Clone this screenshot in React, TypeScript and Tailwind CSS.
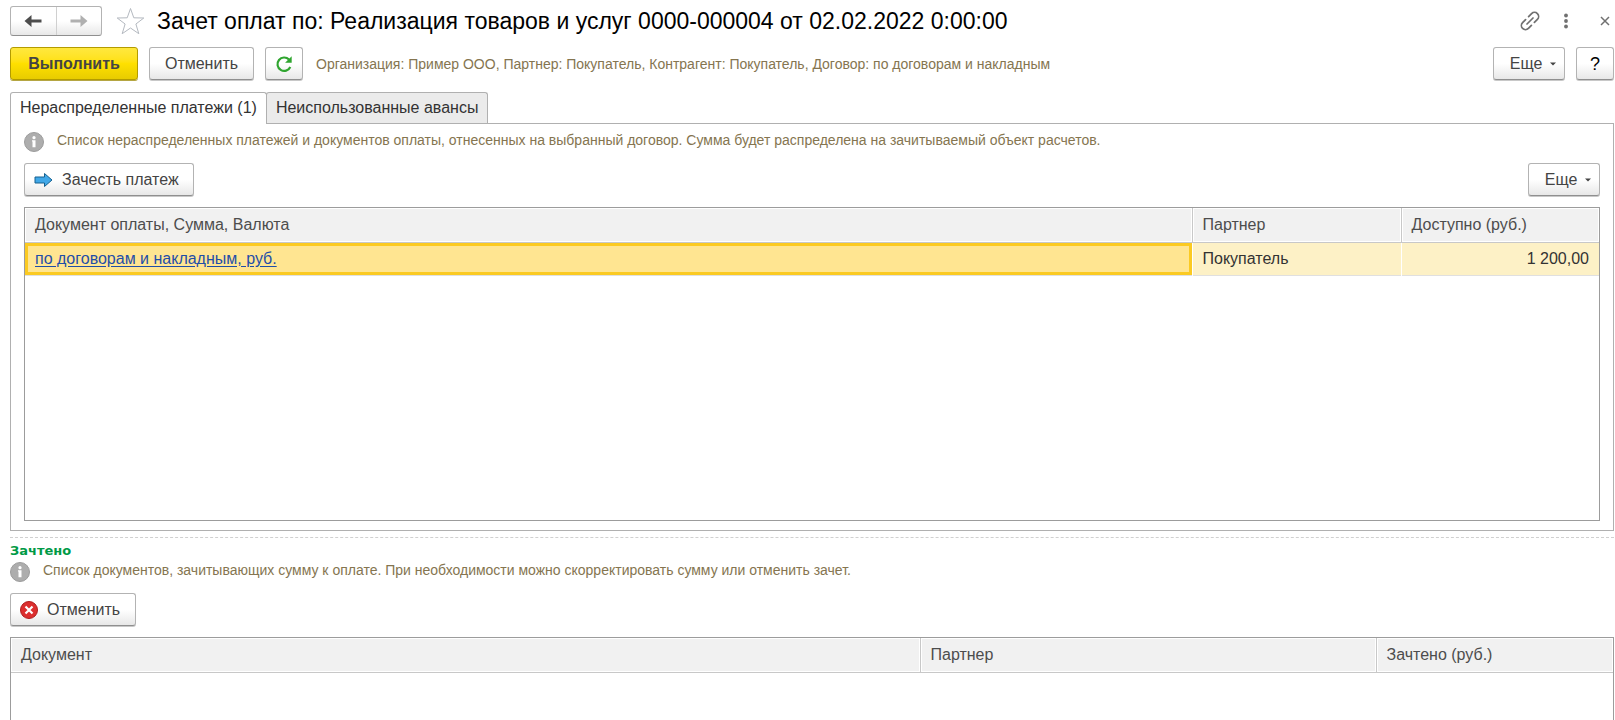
import React, { useState } from 'react'

interface ListColumn {
  title: string
  className: string
}

const buttonBase =
  'flex h-[33px] shrink-0 items-center rounded-[3px] border border-[#b3b3b3] border-b-[#8f8f8f] bg-linear-to-b from-white from-50% to-[#e8e8e8] text-base text-[#444] shadow-[0_1px_0_#c8c8c8]'

const hintText = 'text-sm leading-4 text-[#857550]'

const InfoIcon: React.FC = () => (
  <svg width="20" height="20" viewBox="0 0 20 20" className="shrink-0" aria-hidden="true">
    <circle cx="10" cy="10" r="9.5" fill="#adadad" stroke="#9c9c9c" />
    <circle cx="10" cy="5.7" r="1.6" fill="#fff" />
    <path d="M8 8.3h3.5v7h-3V9.5H8z" fill="#fff" />
  </svg>
)

const ArrowLeft: React.FC = () => (
  <svg width="18" height="14" viewBox="0 0 18 14" aria-hidden="true">
    <path d="M.5 7l7-6v4.500h10v3h-10V13z" fill="currentColor" />
  </svg>
)

const MoreButton: React.FC = () => (
  <button type="button" className={`${buttonBase} w-[72px] justify-center gap-2 pl-2`}>
    Еще
    <svg width="6" height="4" viewBox="0 0 6 4" aria-hidden="true">
      <path d="M0 .5h6L3 3.5z" fill="#444" />
    </svg>
  </button>
)

const ListHead: React.FC<{ columns: ListColumn[] }> = ({ columns }) => (
  <thead>
    <tr className="h-[34px] border-b border-[#c8c8c8]">
      {columns.map((column) => (
        <th
          key={column.title}
          className={`border-r border-[#c8c8c8] bg-[#f1f1f1] px-[10px] text-left font-normal text-[#4d4d4d] shadow-[inset_0_0_0_1px_#fff] last:border-r-0 ${column.className}`}
        >
          {column.title}
        </th>
      ))}
    </tr>
  </thead>
)

const paymentColumns: ListColumn[] = [
  { title: 'Документ оплаты, Сумма, Валюта', className: '' },
  { title: 'Партнер', className: 'w-[209px]' },
  { title: 'Доступно (руб.)', className: 'w-[198px]' },
]

const offsetColumns: ListColumn[] = [
  { title: 'Документ', className: '' },
  { title: 'Партнер', className: 'w-[456px]' },
  { title: 'Зачтено (руб.)', className: 'w-[237px]' },
]

const App: React.FC = () => {
  const [activeTab, setActiveTab] = useState(0)
  const tabs = ['Нераспределенные платежи (1)', 'Неиспользованные авансы']

  return (
    <main className="flex min-h-screen flex-col bg-white pl-[10px] pr-px font-['Liberation_Sans',Arial,sans-serif] text-base text-[#333]">
      {/* Title bar */}
      <header className="flex items-center pt-[6px]">
        <div className="flex h-[30px] w-[92px] shrink-0 rounded-[3px] border border-[#b3b3b3] border-b-[#8f8f8f] bg-linear-to-b from-white from-50% to-[#e8e8e8]">
          <button type="button" aria-label="Назад" className="flex flex-1 items-center justify-center border-r border-[#d0d0d0] text-[#4d4d4d]">
            <ArrowLeft />
          </button>
          <button type="button" aria-label="Вперед" className="flex flex-1 items-center justify-center text-[#b0b0b0]">
            <span className="rotate-180">
              <ArrowLeft />
            </span>
          </button>
        </div>
        <button type="button" aria-label="В избранное" className="ml-[14px] shrink-0">
          <svg width="29" height="29" viewBox="0 0 29 29" fill="none" stroke="#b4b9c0" aria-hidden="true">
            <path d="M14.5 1.5l3.3 9.3 10 .2-7.900 6 2.900 9.700-8.300-5.700-8.300 5.700 2.900-9.700-7.900-6 10-.2z" />
          </svg>
        </button>
        <h1 className="ml-3 text-[23px] leading-7 text-black">
          Зачет оплат по: Реализация товаров и услуг 0000-000004 от 02.02.2022 0:00:00
        </h1>
        <div className="ml-auto flex items-center text-[#707070]">
          <button type="button" aria-label="Получить ссылку">
            <svg width="20" height="20" viewBox="0 0 20 20" fill="none" stroke="currentColor" strokeWidth="1.7" strokeLinecap="round" aria-hidden="true">
              <path d="M8.600 5.600l3-3a4 4 0 0 1 5.800 5.800l-3 3M11.400 14.400l-3 3a4 4 0 0 1-5.800-5.800l3-3M7 13l6-6" />
            </svg>
          </button>
          <button type="button" aria-label="Меню" className="ml-6">
            <svg width="4" height="16" viewBox="0 0 4 16" fill="currentColor" aria-hidden="true">
              <circle cx="2" cy="2.5" r="1.9" />
              <circle cx="2" cy="8" r="1.9" />
              <circle cx="2" cy="13.5" r="1.9" />
            </svg>
          </button>
          <button type="button" aria-label="Закрыть" className="ml-8 mr-1">
            <svg width="10" height="10" viewBox="0 0 10 10" stroke="currentColor" strokeWidth="1.5" aria-hidden="true">
              <path d="M1 1l8 8M9 1l-8 8" />
            </svg>
          </button>
        </div>
      </header>

      {/* Command bar */}
      <div className="mt-[11px] flex items-center">
        <button
          type="button"
          className="h-[33px] w-32 shrink-0 rounded-[3px] border border-[#b39b00] bg-linear-to-b from-[#ffe83d] via-[#ffe000] to-[#e8cc00] font-bold text-[#444] shadow-[0_1px_0_#b5a642]"
        >
          Выполнить
        </button>
        <button type="button" className={`${buttonBase} ml-[11px] w-[105px] justify-center`}>
          Отменить
        </button>
        <button type="button" aria-label="Обновить" className={`${buttonBase} ml-[11px] w-[38px] justify-center`}>
          <svg width="18" height="18" viewBox="0 0 18 18" aria-hidden="true">
            <path d="M14 4.500A6.700 6.700 0 1 0 15.300 12" fill="none" stroke="#2fa52f" strokeWidth="2.2" />
            <path d="M16.700 1.200v6.600h-6.600z" fill="#2fa52f" />
          </svg>
        </button>
        <p className={`ml-[13px] ${hintText}`}>
          Организация: Пример ООО, Партнер: Покупатель, Контрагент: Покупатель, Договор: по договорам и накладным
        </p>
        <div className="ml-auto flex gap-[11px]">
          <MoreButton />
          <button type="button" aria-label="Справка" className={`${buttonBase} w-[38px] justify-center`}>
            <span className="text-lg text-black">?</span>
          </button>
        </div>
      </div>

      {/* Tabs */}
      <div role="tablist" className="relative mt-3 flex">
        {tabs.map((tab, index) => (
          <button
            key={tab}
            type="button"
            role="tab"
            aria-selected={activeTab === index}
            onClick={() => setActiveTab(index)}
            className={`rounded-t-[3px] border border-b-0 border-[#b0b0b0] px-[9px] ${
              activeTab === index ? '-mb-px h-8 bg-white pb-px' : '-ml-px h-[31px] bg-[#ebebeb]'
            }`}
          >
            {tab}
          </button>
        ))}
      </div>
      <section className="border border-[#b0b0b0] px-[13px] pb-[9px] pt-2">
        <div className="flex gap-[13px]">
          <InfoIcon />
          <p className={hintText}>
            Список нераспределенных платежей и документов оплаты, отнесенных на выбранный договор. Сумма будет распределена на зачитываемый объект расчетов.
          </p>
        </div>
        <div className="mt-[11px] flex justify-between">
          <button type="button" className={`${buttonBase} w-[170px] gap-[9px] pl-[9px]`}>
            <svg width="19" height="16" viewBox="0 0 19 16" aria-hidden="true">
              <path d="M1 5h9.500V1.500L18 8l-7.500 6.500V11H1z" fill="#41a8e8" stroke="#17618f" />
            </svg>
            Зачесть платеж
          </button>
          <MoreButton />
        </div>
        <div className="mt-[11px] min-h-[314px] border border-[#9c9c9c]">
          <table className="w-full table-fixed border-collapse">
            <ListHead columns={paymentColumns} />
            <tbody>
              <tr className="h-[33px] border-b border-[#e0e0e0] bg-[#fdf1c6]">
                <td className="border-r border-white bg-[#ffe591] px-[10px] shadow-[inset_0_0_0_3px_#fbca22]">
                  <a href="#document" className="text-[#1f4ea8] underline underline-offset-2">
                    по договорам и накладным, руб.
                  </a>
                </td>
                <td className="border-r border-white px-[10px]">Покупатель</td>
                <td className="px-[10px] text-right">1 200,00</td>
              </tr>
            </tbody>
          </table>
        </div>
      </section>

      {/* Offset documents */}
      <section className="mt-[6px] flex flex-1 flex-col border-t border-dashed border-[#d0d0d0] pt-1">
        <h2 className="font-['DejaVu_Sans',sans-serif] text-[13px] leading-[18px] font-bold text-[#009a46]">Зачтено</h2>
        <div className="mt-[2px] flex gap-[13px]">
          <InfoIcon />
          <p className={hintText}>
            Список документов, зачитывающих сумму к оплате. При необходимости можно скорректировать сумму или отменить зачет.
          </p>
        </div>
        <button type="button" className={`${buttonBase} mt-[11px] w-[126px] gap-[9px] self-start pl-[9px]`}>
          <svg width="18" height="18" viewBox="0 0 18 18" aria-hidden="true">
            <circle cx="9" cy="9" r="8.5" fill="#dc2f2f" stroke="#b01e1e" />
            <path d="M5.500 5.500l7 7M12.500 5.500l-7 7" stroke="#fff" strokeWidth="2.2" />
          </svg>
          Отменить
        </button>
        <div className="mt-[11px] flex-1 border border-b-0 border-[#9c9c9c]">
          <table className="w-full table-fixed border-collapse">
            <ListHead columns={offsetColumns} />
          </table>
        </div>
      </section>
    </main>
  )
}

export default App
